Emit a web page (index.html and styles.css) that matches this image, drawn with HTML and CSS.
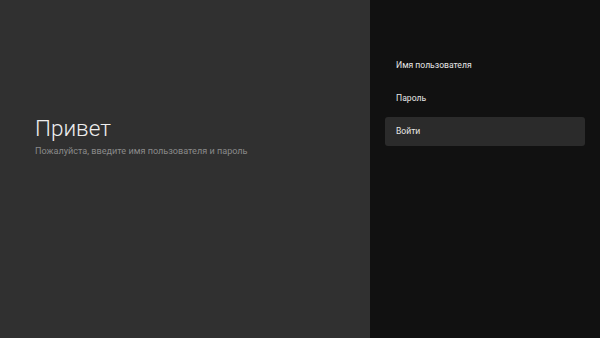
FILE: index.html
```html
<!DOCTYPE html>
<html lang="ru">
<head>
    <meta charset="UTF-8">
    <title>Вход</title>
    <link rel="stylesheet" href="styles.css">
</head>
<body>
    <div class="screen">
        <div class="guidance">
            <h1 class="title">Привет</h1>
            <p class="description">Пожалуйста, введите имя пользователя и пароль</p>
        </div>
        <div class="actions">
            <div class="action">Имя пользователя</div>
            <div class="action">Пароль</div>
            <div class="action focused">Войти</div>
        </div>
    </div>
</body>
</html>
```

FILE: styles.css
```css
body {
    margin: 0;
    font-family: Roboto, "Noto Sans", sans-serif;
    background-color: #111111;
}

.screen {
    display: flex;
    width: 600px;
    height: 338px;
    overflow: hidden;
}

.guidance {
    width: 370px;
    background-color: #303030;
    display: flex;
    flex-direction: column;
    padding: 113px 0 0 35px;
    box-sizing: border-box;
}

.title {
    margin: 0;
    font-size: 22.5px;
    font-weight: 300;
    color: #eeeeee;
    line-height: 30px;
}

.description {
    margin: 3px 0 0;
    font-size: 9.1px;
    color: #8a8a8a;
}

.actions {
    flex: 1;
    display: flex;
    flex-direction: column;
    gap: 4px;
    padding: 51px 15px 0;
}

.action {
    height: 29px;
    line-height: 29px;
    padding: 0 11px;
    font-size: 8.6px;
    color: #e6e6e6;
    border-radius: 3px;
}

.focused {
    background-color: #2b2b2b;
}
```
